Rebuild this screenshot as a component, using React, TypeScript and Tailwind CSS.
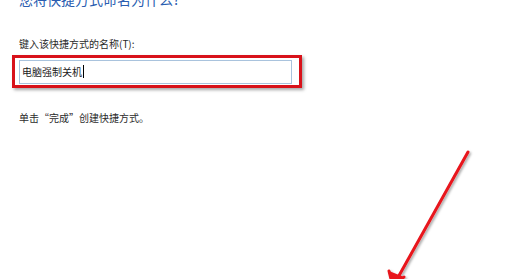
const CJK = 'font-["Microsoft_YaHei","Noto_Sans_CJK_SC",sans-serif]';

function Arrow() {
  return (
    <svg className="absolute left-0 top-0 pointer-events-none" width={524} height={279} viewBox="0 0 524 279">
      <defs>
        <filter id="sh" x="-20%" y="-20%" width="140%" height="140%">
          <feDropShadow dx="1.5" dy="1.5" stdDeviation="1.2" floodColor="#000" floodOpacity="0.35" />
        </filter>
      </defs>
      <g filter="url(#sh)" stroke="#e8131b" strokeWidth={3} strokeLinecap="round" fill="none">
        <line x1={468} y1={152} x2={396} y2={281} />
        <path d="M389 271 L393 287 L404 277" fill="#e8131b" />
      </g>
    </svg>
  );
}

export default function App() {
  return (
    <div className={`relative w-[524px] h-[279px] overflow-hidden bg-white ${CJK}`}>
      <div className="pl-[19px]">
        <h1 className="-mt-[10px] text-[14px] leading-[18px] text-[#2a5db0]">您将快捷方式命名为什么?</h1>
        <div className="mt-[30px] text-[10px] leading-[12px] text-[#2b2b2b]">键入该快捷方式的名称(T):</div>
      </div>
      <div className="ml-[12px] mt-[5px] w-[290px] h-[33px] border-[3px] border-[#d8121a] shadow-[2px_2px_3px_rgba(0,0,0,0.35)] flex items-center pl-[4px]">
        <div className="w-[273px] h-[24px] border border-[#a9c3dd] flex items-center pl-[2px] text-[10px] text-[#1a1a1a]">
          电脑强制关机
          <span className="ml-[1px] w-px h-[13px] bg-black" />
        </div>
      </div>
      <div className="pl-[19px] mt-[24px] text-[10px] leading-[12px] text-[#2b2b2b]">单击“完成”创建快捷方式。</div>
      <Arrow />
    </div>
  );
}
